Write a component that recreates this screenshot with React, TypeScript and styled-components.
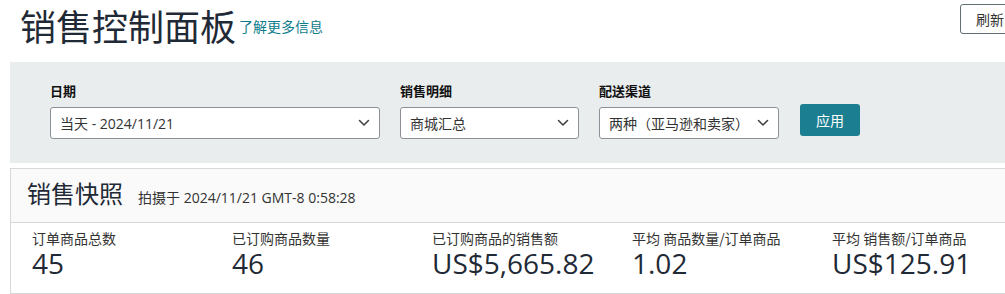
import React from 'react'
import styled, { createGlobalStyle } from 'styled-components'

const GlobalStyle = createGlobalStyle`
  html, body {
    margin: 0;
    padding: 0;
    background: #ffffff;
    overflow: hidden;
  }
  body {
    font-family: "Open Sans", "Noto Sans CJK SC", sans-serif;
    color: #333333;
  }
`

const Page = styled.div`
  width: 1030px;
`

const TopBar = styled.header`
  display: flex;
  align-items: flex-start;
  height: 62px;
  padding: 0 10px 0 20px;
  box-sizing: border-box;
`

const Title = styled.h1`
  margin: 0;
  font-size: 36px;
  line-height: 50px;
  font-weight: 400;
  color: #1f2a36;
  font-family: "Noto Sans CJK SC", sans-serif;
`

const LearnMore = styled.a`
  margin-left: 3px;
  margin-top: 16px;
  font-size: 14px;
  line-height: 20px;
  color: #0f7c8c;
  text-decoration: none;
  font-family: "Noto Sans CJK SC", sans-serif;
`

const RefreshButton = styled.button`
  margin-left: auto;
  margin-top: 4px;
  width: 60px;
  height: 30px;
  padding: 0 0 0 15px;
  text-align: left;
  background: #ffffff;
  border: 1px solid #5f6f72;
  border-radius: 3px;
  font-size: 14px;
  color: #333;
  font-family: "Noto Sans CJK SC", sans-serif;
`

const FilterPanel = styled.section`
  margin-left: 10px;
  background: #eaeded;
  padding: 20px 0 24px 40px;
  display: flex;
  align-items: flex-end;
  gap: 20px;
`

const Field = styled.div`
  display: flex;
  flex-direction: column;
  gap: 7px;
`

const FieldLabel = styled.label`
  font-size: 13px;
  line-height: 18px;
  font-weight: 700;
  color: #111;
  font-family: "Noto Sans CJK SC", sans-serif;
`

const SelectBox = styled.div<{ $width: number }>`
  width: ${({ $width }) => $width}px;
  height: 32px;
  box-sizing: border-box;
  background: #ffffff;
  border: 1px solid #8d9096;
  border-radius: 3px;
  display: flex;
  align-items: center;
  justify-content: space-between;
  padding: 0 9px 0 9px;
  font-size: 14px;
  color: #333;
`

const ApplyButton = styled.button`
  width: 60px;
  height: 32px;
  margin-bottom: 3px;
  margin-left: 1px;
  border: none;
  border-radius: 3px;
  background: #1b7e91;
  color: #ffffff;
  font-size: 14px;
  font-family: "Noto Sans CJK SC", sans-serif;
`

const SnapshotCard = styled.section`
  margin: 5px 0 0 10px;
  border: 1px solid #d5d9d9;
  border-right: none;
`

const SnapshotHeader = styled.div`
  display: flex;
  align-items: baseline;
  gap: 15px;
  padding: 8px 16px 13px;
  background: #fafafa;
  border-bottom: 1px solid #d5d9d9;
`

const SnapshotTitle = styled.h2`
  margin: 0;
  font-size: 24px;
  line-height: 32px;
  font-weight: 400;
  color: #1f2a36;
  font-family: "Noto Sans CJK SC", sans-serif;
`

const SnapshotTime = styled.span`
  font-size: 14px;
  color: #333;
`

const MetricRow = styled.div`
  display: grid;
  grid-template-columns: repeat(5, 200px);
  padding: 5px 0 15px 21px;
`

const Metric = styled.div`
  display: flex;
  flex-direction: column;
`

const MetricLabel = styled.span`
  font-size: 14px;
  line-height: 20px;
  color: #333;
  font-family: "Noto Sans CJK SC", sans-serif;
`

const MetricValue = styled.span`
  font-size: 28px;
  line-height: 30px;
  color: #1f2a36;
`

const Chevron = () => (
  <svg width="12" height="8" viewBox="0 0 12 8" fill="none">
    <path d="M1.5 1.5 L6 6 L10.5 1.5" stroke="#444" strokeWidth="1.6" strokeLinecap="round" strokeLinejoin="round" />
  </svg>
)

const filters = [
  { label: '日期', value: '当天 - 2024/11/21', width: 330 },
  { label: '销售明细', value: '商城汇总', width: 179 },
  { label: '配送渠道', value: '两种（亚马逊和卖家）', width: 180 },
]

const metrics = [
  { label: '订单商品总数', value: '45' },
  { label: '已订购商品数量', value: '46' },
  { label: '已订购商品的销售额', value: 'US$5,665.82' },
  { label: '平均 商品数量/订单商品', value: '1.02' },
  { label: '平均 销售额/订单商品', value: 'US$125.91' },
]

export default function App() {
  return (
    <Page>
      <GlobalStyle />
      <TopBar>
        <Title>销售控制面板</Title>
        <LearnMore href="#">了解更多信息</LearnMore>
        <RefreshButton>刷新</RefreshButton>
      </TopBar>
      <FilterPanel>
        {filters.map((f) => (
          <Field key={f.label}>
            <FieldLabel>{f.label}</FieldLabel>
            <SelectBox $width={f.width}>
              <span>{f.value}</span>
              <Chevron />
            </SelectBox>
          </Field>
        ))}
        <ApplyButton>应用</ApplyButton>
      </FilterPanel>
      <SnapshotCard>
        <SnapshotHeader>
          <SnapshotTitle>销售快照</SnapshotTitle>
          <SnapshotTime>拍摄于 2024/11/21 GMT-8 0:58:28</SnapshotTime>
        </SnapshotHeader>
        <MetricRow>
          {metrics.map((m) => (
            <Metric key={m.label}>
              <MetricLabel>{m.label}</MetricLabel>
              <MetricValue>{m.value}</MetricValue>
            </Metric>
          ))}
        </MetricRow>
      </SnapshotCard>
    </Page>
  )
}
